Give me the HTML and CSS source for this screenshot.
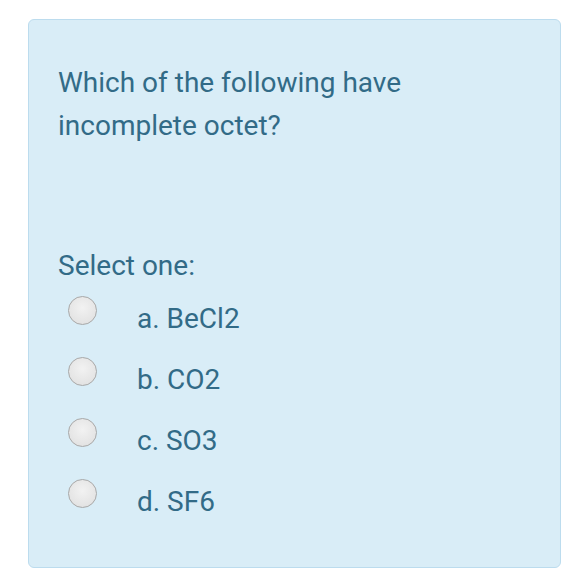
FILE: index.html
```html
<!DOCTYPE html>
<html>
<head>
<meta charset="utf-8">
<link rel="stylesheet" href="styles.css">
</head>
<body>
<div class="card">
  <div class="question">Which of the following have<br>incomplete octet?</div>
  <div class="prompt">Select one:</div>
  <div class="options">
    <div class="option"><span class="radio"></span><span class="label">a. BeCl2</span></div>
    <div class="option"><span class="radio"></span><span class="label">b. CO2</span></div>
    <div class="option"><span class="radio"></span><span class="label">c. SO3</span></div>
    <div class="option"><span class="radio"></span><span class="label">d. SF6</span></div>
  </div>
</div>
</body>
</html>
```
FILE: styles.css
```css
html, body { margin: 0; padding: 0; background: #ffffff; }
body { padding: 19px 14px 8px 28px; font-family: Roboto, "Noto Sans", sans-serif; color: #326b87; }
.card {
  width: 533px;
  height: 549px;
  box-sizing: border-box;
  background: #d9edf7;
  border: 1px solid #bcdcee;
  border-radius: 6px;
  padding: 41px 20px 0 29px;
}
.question { font-size: 28px; line-height: 43px; }
.prompt { font-size: 28px; line-height: 40px; margin-top: 99px; }
.options { display: flex; flex-direction: column; margin-top: 2px; }
.option { display: flex; align-items: flex-start; height: 61px; line-height: 61px; }
.radio {
  width: 27px; height: 27px; border-radius: 50%;
  border: 1px solid #a8a8a8;
  background: radial-gradient(circle at 50% 40%, #f2f2f2 0%, #e4e4e4 70%, #d8d8d8 100%);
  margin-left: 10px;
  margin-top: 8px;
  flex: none;
}
.label { font-size: 28px; margin-left: 40px; }
```
